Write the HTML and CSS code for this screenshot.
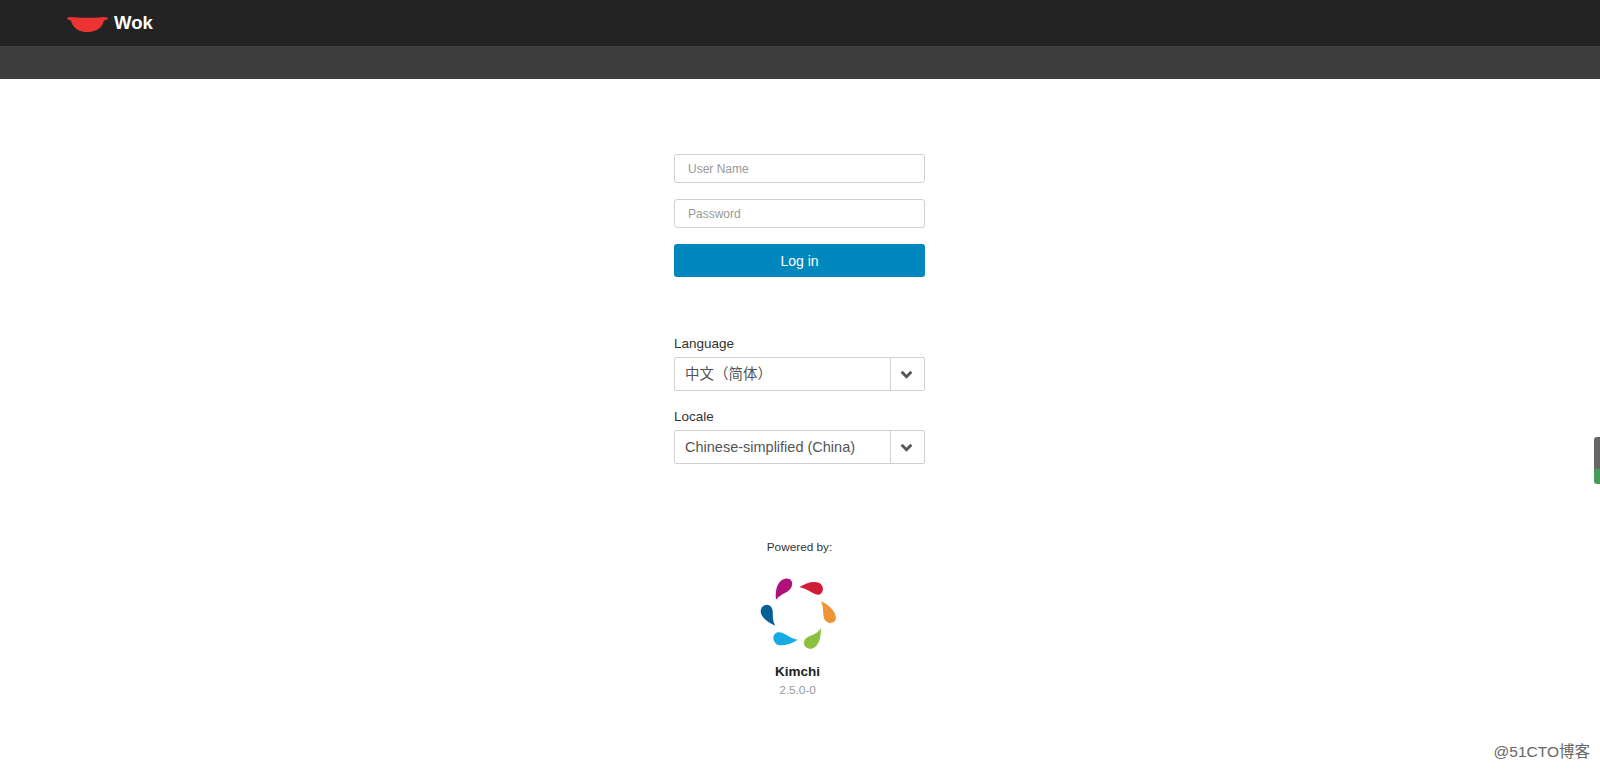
FILE: index.html
```html
<!DOCTYPE html>
<html lang="en">
<head>
  <meta charset="UTF-8">
  <meta name="viewport" content="width=device-width, initial-scale=1.0">
  <title>Wok</title>
  <link rel="stylesheet" href="styles.css">
</head>
<body>
  <header class="topbar">
    <svg class="wok-icon" viewBox="0 0 41 16" width="41" height="16" aria-hidden="true">
      <path d="M0 2.6 C1 1 3 .8 5 1 C10 2 31 2 36 1 C38 .8 40 1 41 2.6 C40 4.2 38 4.4 37 4.4 C36 10 30 16 21 16 L19 16 C11 16 5 10 4 4.4 C3 4.4 1 4.2 0 2.6 Z" fill="#ee3333"/>
    </svg>
    <span class="brand">Wok</span>
  </header>
  <div class="subbar"></div>

  <main class="login">
    <form class="login-form">
      <input type="text" placeholder="User Name">
      <input type="password" placeholder="Password">
      <button type="button">Log in</button>
    </form>

    <div class="settings">
      <label>Language</label>
      <div class="select">
        <span class="select-value">中文（简体）</span>
        <span class="select-arrow">
          <svg viewBox="0 0 12 8" width="13" height="9" aria-hidden="true"><path d="M1.5 1.5 L6 6 L10.5 1.5" fill="none" stroke="#555" stroke-width="2.6"/></svg>
        </span>
      </div>
      <label>Locale</label>
      <div class="select">
        <span class="select-value">Chinese-simplified (China)</span>
        <span class="select-arrow">
          <svg viewBox="0 0 12 8" width="13" height="9" aria-hidden="true"><path d="M1.5 1.5 L6 6 L10.5 1.5" fill="none" stroke="#555" stroke-width="2.6"/></svg>
        </span>
      </div>
    </div>

    <div class="powered">
      <p class="powered-label">Powered by:</p>
      <div class="plugin">
        <svg class="kimchi-logo" viewBox="0 0 240 240" width="80" height="80" aria-hidden="true">
          <g transform="translate(-50 -130)">
            <path d="M107 207 C103 175 113 148 135 144 C153 141 161 156 152 172 C142 187 120 190 107 207 Z" fill="#b0107a"/>
            <path d="M177 170 C195 156 220 150 236 156 C252 164 252 187 236 192 C220 194 205 175 177 170 Z" fill="#d01c36"/>
            <path d="M242 212 C267 222 287 245 287 263 C285 280 261 282 252 266 C246 250 252 235 242 212 Z" fill="#ee9433"/>
            <path d="M242 292 C242 320 237 347 215 354 C196 357 185 341 194 326 C205 313 228 315 242 292 Z" fill="#8cc13f"/>
            <path d="M172 327 C150 342 125 347 111 342 C95 333 95 310 111 305 C130 301 145 322 172 327 Z" fill="#14ace2"/>
            <path d="M105 285 C85 277 63 261 61 243 C61 223 84 215 94 231 C102 245 92 262 105 285 Z" fill="#075f96"/>
          </g>
        </svg>
        <div class="plugin-name">Kimchi</div>
        <div class="plugin-version">2.5.0-0</div>
      </div>
    </div>
  </main>

  <div class="side-tab"></div>
  <div class="watermark">@51CTO博客</div>
</body>
</html>
```

FILE: styles.css
```css
html, body {
  height: 100%;
}

body {
  margin: 0;
  overflow: hidden;
  background-color: #fff;
  color: #333;
  font-family: "Liberation Sans", Arial, sans-serif;
  font-size: 14px;
}

.topbar {
  display: flex;
  align-items: center;
  gap: 6px;
  height: 46px;
  padding-left: 67px;
  box-sizing: border-box;
  background-color: #232323;
}

.wok-icon {
  margin-top: 2px;
}

.brand {
  color: #fff;
  font-size: 18.5px;
  font-weight: bold;
}

.subbar {
  height: 33px;
  background-color: #3e3e3e;
}

.login {
  width: 251px;
  margin: 0 auto;
  padding-top: 75px;
  padding-right: 1px;
}

.login-form {
  display: flex;
  flex-direction: column;
}

.login-form input {
  height: 29px;
  margin-bottom: 16px;
  padding: 0 13px;
  border: 1px solid #d0d0d0;
  border-radius: 3px;
  box-sizing: border-box;
  font-family: inherit;
  font-size: 12px;
}

.login-form input::placeholder {
  color: #999;
  opacity: 1;
}

.login-form button {
  height: 33px;
  border: 0;
  border-radius: 3px;
  background-color: #0088be;
  color: #fff;
  font-family: inherit;
  font-size: 14px;
}

.settings {
  margin-top: 56px;
}

.settings label {
  display: block;
  height: 20px;
  margin-bottom: 4px;
  font-size: 13.5px;
  line-height: 22px;
  color: #333;
}

.select {
  display: flex;
  height: 34px;
  margin-bottom: 15px;
  border: 1px solid #d0d0d0;
  border-radius: 2px;
  box-sizing: border-box;
  color: #555;
  font-size: 14.5px;
}

.select-value {
  flex: 1;
  padding-left: 10px;
  line-height: 32px;
  font-family: "Liberation Sans", "Noto Sans CJK SC", sans-serif;
}

.select-arrow {
  display: flex;
  align-items: center;
  justify-content: center;
  width: 34px;
  padding-right: 2px;
  box-sizing: border-box;
  border-left: 1px solid #d0d0d0;
}

.powered {
  margin-top: 75px;
  text-align: center;
}

.powered-label {
  margin: 0 0 19px;
  color: #333;
  font-size: 11.8px;
  line-height: 16px;
}

.plugin {
  padding-right: 4px;
}

.kimchi-logo {
  display: block;
  margin: 0 auto;
  transform: translateX(-1px);
}

.plugin-name {
  margin-top: 9px;
  color: #222;
  font-size: 13.5px;
  font-weight: bold;
  line-height: 18px;
}

.plugin-version {
  margin-top: 1px;
  color: #999;
  font-size: 11.8px;
  line-height: 16px;
}

.side-tab {
  position: absolute;
  right: 0;
  top: 437px;
  width: 6px;
  height: 47px;
  border-radius: 3px 0 0 3px;
  background: linear-gradient(#666 0, #666 66%, #4a9a5c 70%, #4a9a5c 100%);
}

.watermark {
  position: absolute;
  right: 10px;
  bottom: 7px;
  color: #666;
  font-family: "Liberation Sans", "Noto Sans CJK SC", sans-serif;
  font-size: 15.5px;
  line-height: 20px;
}
```
